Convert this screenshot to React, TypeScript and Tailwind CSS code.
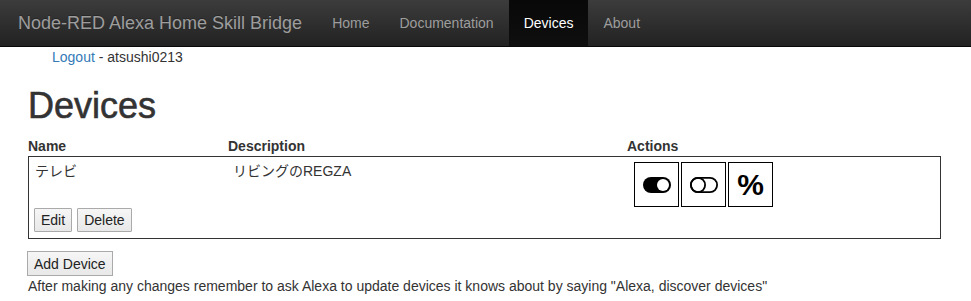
import React from "react";

const font = "font-['Liberation_Sans','Noto_Sans_CJK_JP',Arial,sans-serif]";

function ToggleOn() {
  return (
    <svg width="28" height="16" viewBox="0 0 28 16">
      <rect x="0" y="0" width="28" height="16" rx="8" fill="#000" />
      <circle cx="20" cy="8" r="6" fill="#fff" />
    </svg>
  );
}

function ToggleOff() {
  return (
    <svg width="28" height="16" viewBox="0 0 28 16">
      <rect x="0.9" y="0.9" width="26.2" height="14.2" rx="7.1" fill="none" stroke="#000" strokeWidth="1.8" />
      <circle cx="8" cy="8" r="7.1" fill="none" stroke="#000" strokeWidth="1.8" />
    </svg>
  );
}

function ActionBtn({ children }: { children: React.ReactNode }) {
  return (
    <div className="w-[45px] h-[45px] border border-black bg-white flex items-center justify-center">
      {children}
    </div>
  );
}

function SmallBtn({ children }: { children: React.ReactNode }) {
  return (
    <button className="h-[24px] px-[6px] border border-[#aaaaaa] bg-gradient-to-b from-[#f6f6f6] to-[#e8e8e8] text-[14px] leading-[20px] text-[#222] rounded-[1px]">
      {children}
    </button>
  );
}

export default function App() {
  return (
    <div className={`${font} text-[14px] leading-[20px] text-[#333] bg-white w-[971px] h-[301px] overflow-hidden`}>
      <nav className="h-[47px] border-b border-[#080808] bg-gradient-to-b from-[#3c3c3c] to-[#222222] flex items-stretch pl-[18px]">
        <div className="text-[18px] leading-[46px] text-[#9d9d9d] [text-shadow:0_-1px_0_rgba(0,0,0,0.25)]">
          Node-RED Alexa Home Skill Bridge
        </div>
        <ul className="flex ml-[15px]">
          <li className="px-[15px] leading-[46px] text-[#9d9d9d]">Home</li>
          <li className="px-[15px] leading-[46px] text-[#9d9d9d]">Documentation</li>
          <li className="px-[15px] leading-[46px] text-white bg-gradient-to-b from-[#080808] to-[#0f0f0f]">Devices</li>
          <li className="px-[15px] leading-[46px] text-[#9d9d9d]">About</li>
        </ul>
      </nav>

      <div className="pl-[52px] text-[#333]">
        <a className="text-[#337ab7]">Logout</a> - atsushi0213
      </div>

      <div className="pl-[28px] pr-[30px]">
        <h1 className="text-[36px] leading-[40px] font-medium mt-[19px] mb-[10px] text-[#333] [-webkit-text-stroke:0.6px_#333]">Devices</h1>

        <div className="grid grid-cols-[200px_399px_1fr] font-bold">
          <div>Name</div>
          <div>Description</div>
          <div>Actions</div>
        </div>

        <div className="border border-[#333] pl-[6px] pt-[4px] pb-[6px] grid grid-cols-[198px_401px_1fr]">
          <div className="flex flex-col">
            <div>テレビ</div>
            <div className="flex gap-[5px] mt-[27px] -ml-[1px]">
              <SmallBtn>Edit</SmallBtn>
              <SmallBtn>Delete</SmallBtn>
            </div>
          </div>
          <div>リビングのREGZA</div>
          <div className="flex gap-[2px] mt-[1px] items-start">
            <ActionBtn>
              <ToggleOn />
            </ActionBtn>
            <ActionBtn>
              <ToggleOff />
            </ActionBtn>
            <ActionBtn>
              <span className="text-[30px] leading-[30px] font-bold text-black">%</span>
            </ActionBtn>
          </div>
        </div>

        <div className="mt-[12px] -ml-[1px]">
          <button className="h-[25px] px-[6px] border border-[#aaaaaa] bg-gradient-to-b from-[#f6f6f6] to-[#e8e8e8] text-[14px] leading-[20px] text-[#222]">
            Add Device
          </button>
        </div>
        <div>
          After making any changes remember to ask Alexa to update devices it knows about by saying "Alexa, discover devices"
        </div>
      </div>
    </div>
  );
}
